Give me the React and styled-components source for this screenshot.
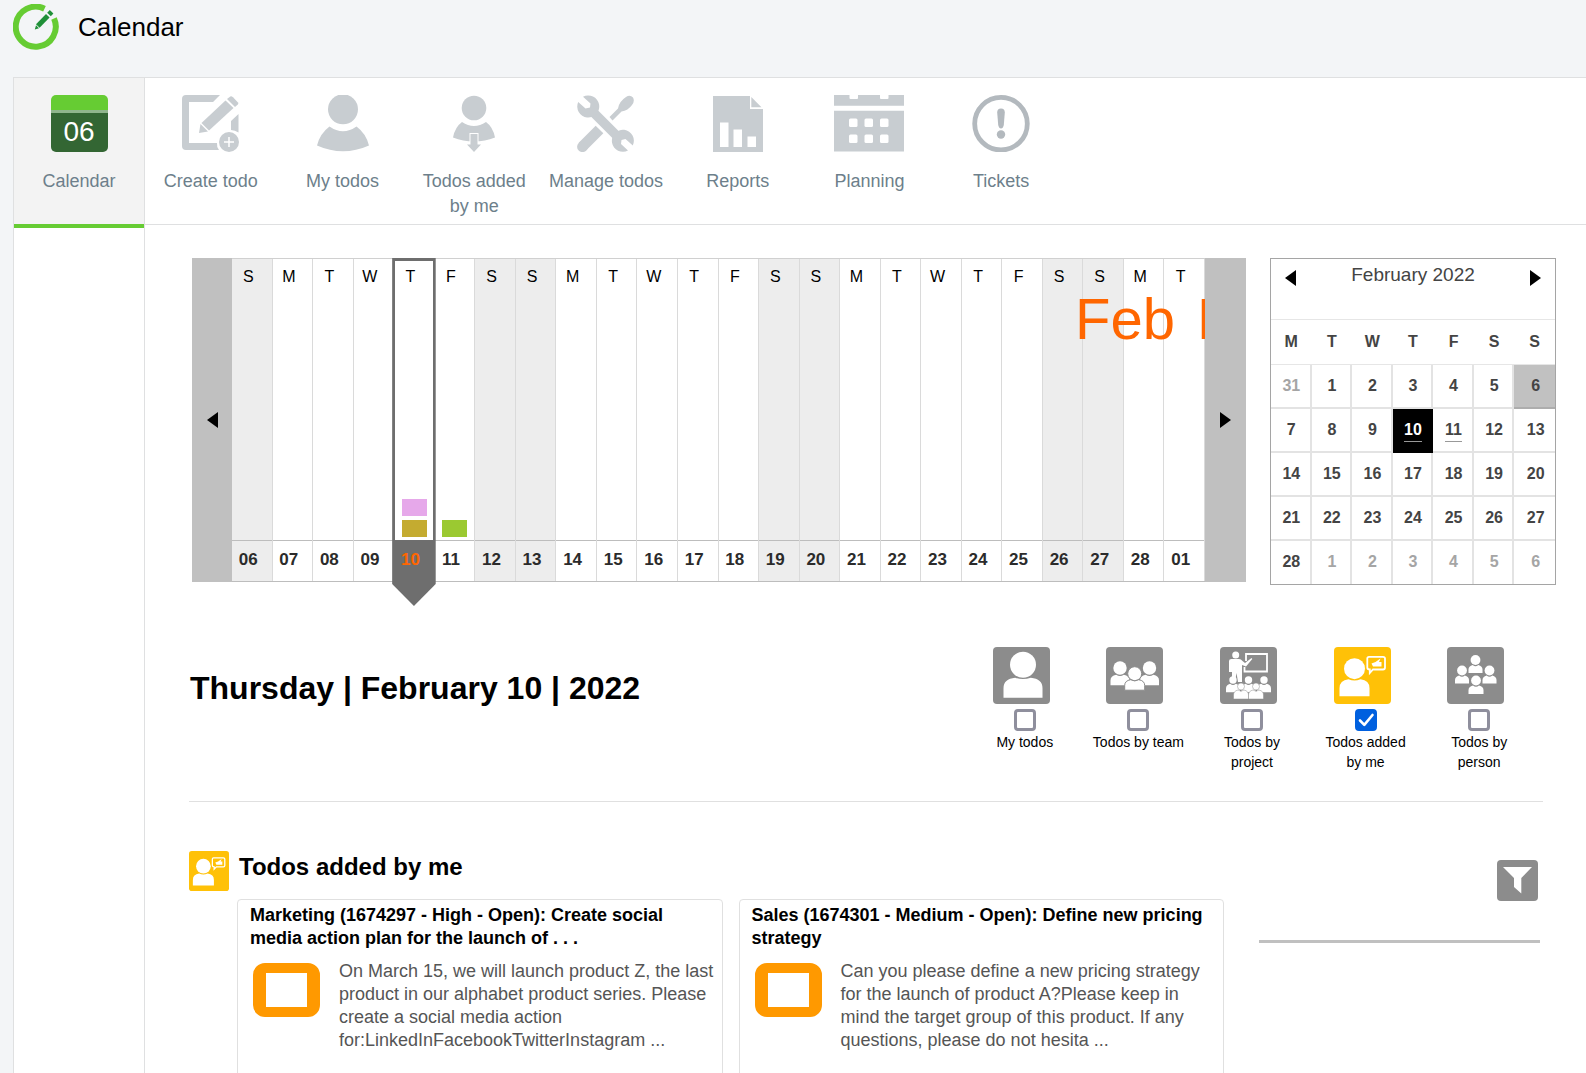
import React, { useState } from "react";
import styled, { createGlobalStyle, css } from "styled-components";

const GlobalStyle = createGlobalStyle`
  *, *::before, *::after { box-sizing: border-box; }
  html, body { margin: 0; padding: 0; }
  body {
    background: #f3f5f7;
    color: #000;
    font-family: "Liberation Sans", Arial, sans-serif;
  }
  h1, h2, h3, p, ol, ul { margin: 0; padding: 0; list-style: none; }
  button { font: inherit; color: inherit; background: none; border: 0; padding: 0; cursor: pointer; }
  svg { display: block; flex: none; }
`;

/* ---------- shell ---------- */

const Shell = styled.div`
  display: flex;
  flex-direction: column;
  height: 100vh;
  overflow: hidden;
`;

const Header = styled.header`
  display: flex;
  align-items: flex-start;
  gap: 19px;
  height: 77px;
  flex: none;
  padding: 4px 0 0 13px;
`;

const PageTitle = styled.h1`
  font-size: 26px;
  font-weight: 400;
  line-height: 46px;
`;

const Panel = styled.div`
  display: flex;
  flex-direction: column;
  flex: 1;
  min-height: 0;
  margin-left: 13px;
  background: #fff;
  border: solid #dfe0e1;
  border-width: 1px 0 0 1px;
`;

const Nav = styled.nav`
  flex: none;
  border-bottom: 1px solid #dfe0e1;
`;

const NavList = styled.ul`
  display: grid;
  grid-template-columns: 131px repeat(7, 1fr);
  max-width: 1053px;
`;

const NavItem = styled.li`
  display: flex;
  height: 146px;
  ${(p) =>
    p.$active &&
    css`
      height: 150px;
      margin-bottom: -4px;
      background: #f3f3f3;
      border-right: 1px solid #dfe0e1;
      position: relative;
      &::after {
        content: "";
        position: absolute;
        left: 0;
        right: 0;
        bottom: 0;
        height: 4px;
        background: #66cc33;
      }
    `}
`;

const NavLink = styled.a`
  display: flex;
  flex-direction: column;
  align-items: center;
  gap: 17px;
  flex: 1;
  padding: 17px 8px 0;
  color: #6d7f8b;
  font-size: 18px;
  line-height: 25px;
  text-align: center;
  text-decoration: none;
`;

const DayBadge = styled.span`
  display: flex;
  align-items: center;
  justify-content: center;
  width: 57px;
  height: 57px;
  padding-top: 15px;
  border-radius: 5px;
  background: linear-gradient(#66cc33 15px, #8fb58c 15px, #8fb58c 18px, #336633 18px);
  color: #fff;
  font-size: 28px;
`;

const Columns = styled.div`
  display: flex;
  flex: 1;
  min-height: 0;
`;

const Aside = styled.aside`
  flex: none;
  width: 131px;
  border-right: 1px solid #dfe0e1;
`;

const Main = styled.main`
  flex: 1;
  min-width: 0;
`;

/* ---------- timeline ---------- */

const Overview = styled.section`
  display: flex;
  align-items: flex-start;
  gap: 24px;
  padding: 33px 30px 0 47px;
`;

const Timeline = styled.div`
  display: flex;
  flex: 1;
  min-width: 0;
  height: 324px;
`;

const TimelineArrow = styled.button`
  display: flex;
  flex: none;
  align-items: center;
  justify-content: center;
  width: ${(p) => (p.$end ? 41 : 40)}px;
  background: #c0c0c0;
`;

const TimelineBody = styled.div`
  position: relative;
  flex: 1;
  min-width: 0;
`;

const Days = styled.ol`
  display: grid;
  grid-template-columns: repeat(24, 1fr);
  height: 100%;
  border-top: 1px solid #d0d0d0;
  border-bottom: 1px solid #bdbdbd;
`;

const Day = styled.li`
  position: relative;
  display: flex;
  flex-direction: column;
  background: ${(p) => (p.$weekend ? "#ededed" : "#fff")};
  border-right: 1px solid #dadada;
  z-index: ${(p) => (p.$selected ? 1 : 0)};
`;

const DayLetter = styled.span`
  position: relative;
  padding: 8px 7px 0 0;
  color: #000;
  font-size: 16px;
  line-height: 20px;
  text-align: center;
`;

const Tags = styled.div`
  position: relative;
  display: flex;
  flex: 1;
  flex-direction: column;
  align-items: center;
  justify-content: flex-end;
  gap: 4px;
  padding: 0 0 3px 1px;
`;

const Tag = styled.span`
  width: 25px;
  height: 17px;
  background: ${(p) => p.$color};
`;

const DayNumber = styled.span`
  position: relative;
  height: 41px;
  padding-right: 7px;
  border-top: 1px solid #bdbdbd;
  color: ${(p) => (p.$selected ? "#ff6600" : "#2b2b2b")};
  font-size: 17px;
  font-weight: 700;
  line-height: 38px;
  text-align: center;
  ${(p) => p.$selected && "border-color: #6e6e6e;"}
`;

const Marker = styled.span`
  position: absolute;
  top: -1px;
  right: -2px;
  bottom: -25px;
  left: -2px;
  background: #6e6e6e;
  clip-path: polygon(0 0, 100% 0, 100% calc(100% - 22px), 50% 100%, 0 calc(100% - 22px));

  &::after {
    content: "";
    position: absolute;
    inset: 3px 3px 66px;
    background: #fff;
  }
`;

const MonthLabels = styled.div`
  position: absolute;
  inset: 0;
  display: flex;
  gap: 22px;
  padding: 28px 0 0 843px;
  overflow: hidden;
  pointer-events: none;
  color: #ff6600;
  font-size: 58px;
  line-height: 66px;
`;

/* ---------- month picker ---------- */

const Picker = styled.div`
  flex: none;
  width: 286px;
  border: 1px solid #a5a5a5;
  color: #444;
`;

const PickerHead = styled.div`
  display: flex;
  align-items: flex-start;
  justify-content: space-between;
  height: 61px;
  padding: 5px 14px 0;
  border-bottom: 1px solid #e6e6e6;
`;

const PickerArrow = styled.button`
  padding-top: 6px;
`;

const PickerTitle = styled.h2`
  font-size: 19px;
  font-weight: 400;
  line-height: 22px;
`;

const PickerTable = styled.table`
  width: 100%;
  table-layout: fixed;
  border-collapse: separate;
  border-spacing: 0;
  font-size: 16px;
  font-weight: 700;
`;

const Weekday = styled.th`
  height: 45px;
  padding: 0;
  border-bottom: 1px solid #e6e6e6;
`;

const DateButton = styled.button`
  display: flex;
  align-items: center;
  justify-content: center;
  width: 100%;
  height: 42px;
  padding-left: 2px;
`;

const DateCell = styled.td`
  height: 44px;
  padding: 0;
  border: solid #e3e3e3;
  border-width: 0 2px 2px 0;
  color: ${(p) => (p.$muted ? "#a5a5a5" : "#444")};
  &:last-child { border-right: 0; }
  tr:last-child > & {
    height: 43px;
    border-bottom: 0;
    vertical-align: top;
  }
  ${(p) =>
    p.$today &&
    css`
      background: #c1c1c1;
      border-color: #adadad;
    `}
  ${(p) =>
    p.$selected &&
    css`
      background: #000;
      border-color: #000;
      color: #fff;
    `}
`;

const DateText = styled.span`
  line-height: 22px;
  ${(p) =>
    p.$marked &&
    css`
      margin-top: 1px;
      border-bottom: 1px solid #999;
    `}
`;

/* ---------- day heading and filters ---------- */

const DaySection = styled.section`
  display: flex;
  justify-content: space-between;
  margin: 62px 43px 0 44px;
  padding: 0 7px 29px 1px;
  border-bottom: 1px solid #e0e0e0;
`;

const DayHeading = styled.h2`
  padding-top: 23px;
  font-size: 32px;
  line-height: 36px;
`;

const Filters = styled.div`
  display: grid;
  grid-template-columns: repeat(5, 1fr);
  width: 568px;
`;

const FilterItem = styled.label`
  display: flex;
  flex-direction: column;
  align-items: center;
  padding: 0 9px;
  font-size: 14px;
  line-height: 20px;
  text-align: center;
  cursor: pointer;
`;

const FilterIcon = styled.span`
  padding-right: 7px;
  margin-bottom: 5px;
`;

const CheckWrap = styled.span`
  position: relative;
  display: flex;
  width: 22px;
  height: 22px;
  margin-bottom: 1px;

  svg { position: absolute; inset: 0; pointer-events: none; }
`;

const Checkbox = styled.input`
  appearance: none;
  width: 22px;
  height: 22px;
  margin: 0;
  border: 3px solid #8f8f9d;
  border-radius: 4px;
  background: #fff;
  &:checked { border-color: #0060df; background: #0060df; }
`;

/* ---------- todo list ---------- */

const TodoSection = styled.section`
  display: flex;
  gap: 35px;
  margin: 0 46px 0 44px;
  padding-top: 49px;
`;

const TodoList = styled.div`
  flex: 1;
  min-width: 0;
`;

const TodoHead = styled.div`
  display: flex;
  gap: 10px;
  margin-bottom: 8px;
`;

const TodoTitle = styled.h2`
  padding-top: 2px;
  font-size: 24px;
  line-height: 28px;
`;

const Cards = styled.div`
  display: grid;
  grid-template-columns: 1fr 1fr;
  gap: 16px;
  margin-left: 48px;
`;

const Card = styled.article`
  min-height: 210px;
  padding: 4px 8px 24px 12px;
  border: 1px solid #e0e0e0;
  border-radius: 4px;
  font-size: 18px;
  line-height: 23px;
`;

const CardTitle = styled.h3`
  font-size: 18px;
`;

const CardBody = styled.div`
  display: flex;
  align-items: flex-start;
  gap: 19px;
  padding: 10px 0 0 3px;
  color: #555;
`;

const Status = styled.span`
  flex: none;
  width: 67px;
  height: 54px;
  margin-top: 3px;
  border: solid #ff9900;
  border-width: 10px 13px;
  border-radius: 12px;
`;

const Tools = styled.div`
  display: flex;
  flex: none;
  flex-direction: column;
  align-items: flex-end;
  gap: 39px;
  width: 281px;
  padding-top: 9px;
`;

const ToolButton = styled.button`
  display: flex;
  align-items: center;
  justify-content: center;
  width: 41px;
  height: 41px;
  margin-right: 2px;
  border-radius: 4px;
  background: #8c8c8c;
`;

const ToolRule = styled.hr`
  width: 100%;
  height: 3px;
  margin: 0;
  border: 0;
  background: #c0c0c0;
`;

/* ---------- drawings ---------- */

const GREY = "#c8cdd1";

const Logo = () => (
  <svg width="46" height="46" viewBox="0 0 46 46" aria-hidden="true">
    <path d="M31.5 4.700A20 20 0 1 0 41 14.500" fill="none" stroke="#66cc33" strokeWidth="6" />
    <path d="M21.800 25.500L23 21.200L26 24.200Z" fill="#1f9038" />
    <path d="M24.800 22L34.800 11.800" stroke="#1f9038" strokeWidth="5" />
    <path d="M36 10.500L38.600 7.800" stroke="#1f9038" strokeWidth="5" />
  </svg>
);

const CreateIcon = () => (
  <svg width="57" height="57" viewBox="0 0 57 57" fill={GREY} aria-hidden="true">
    <path d="M38 0H4Q0 0 0 4V51Q0 55 4 55H37Q34.500 51.500 35 48H7V7H31Z" />
    <path d="M56.500 19V37.500Q53 35 49 35V26Z" />
    <path d="M17 38L18.500 29L26 36.500Z" />
    <path d="M19.500 28L43.500 5.500L51.500 13L27 35.500Z" />
    <path d="M45 4L48.300 1.500Q49.500 1 51 2.300L56 7.500Q56.800 8.600 55.800 9.600L53 12Z" />
    <circle cx="47" cy="47" r="10" />
    <path d="M47 42V52M42 47H52" stroke="#fff" strokeWidth="1.500" />
  </svg>
);

const PersonIcon = () => (
  <svg width="52" height="57" viewBox="0 0 52 57" fill={GREY} aria-hidden="true">
    <ellipse cx="26" cy="14.300" rx="15" ry="15" />
    <path d="M12.500 31.500Q26 41 39.500 31.500Q49 38.500 52 50.500Q39 56.300 26 56.300Q13 56.300 0 50.500Q3 38.500 12.500 31.500Z" />
  </svg>
);

const DelegateIcon = () => (
  <svg width="42" height="57" viewBox="0 0 42 57" fill={GREY} aria-hidden="true">
    <circle cx="21" cy="13" r="12.300" />
    <path d="M9 27Q21 35 33 27Q40 32 42 42.500Q32 46.500 21 46.500Q10 46.500 0 42.500Q2 32 9 27Z" />
    <path d="M17.500 39H24.500V50H27.500L21 57L14.500 50H17.500Z" fill="none" stroke="#fff" strokeWidth="2" />
    <path d="M17.500 39H24.500V49.500H28L21 57L14 49.500H17.500Z" />
  </svg>
);

const ToolsIcon = () => (
  <svg width="57" height="57" viewBox="0 0 57 57" fill="none" aria-hidden="true">
    <path d="M5.500 51.500L22.500 34.500" stroke={GREY} strokeWidth="10.800" />
    <circle cx="5.500" cy="51.700" r="5.400" fill={GREY} />
    <path d="M32.500 22L41 13.500Q42 6.500 49 2Q53 -.5 56 2.500Q58 6 55 10Q51 15.500 44.500 16.500L35.500 25.500Z" fill={GREY} />
    <path d="M15 16L42 43" stroke={GREY} strokeWidth="9.500" />
    <path d="M6 1.800A11 11 0 1 1 1.200 7L8.500 13.500L13 12.500L13.500 8.500Z" fill={GREY} />
    <path d="M51 55.500A11 11 0 1 1 55.800 50.500L48.500 44L44.500 45L44 49Z" fill={GREY} />
  </svg>
);

const ReportsIcon = () => (
  <svg width="50" height="57" viewBox="0 0 50 57" aria-hidden="true">
    <path d="M0 1H37V14H50V57H0Z" fill={GREY} />
    <path d="M38.300 2L48.500 12.300H38.300Z" fill={GREY} />
    <path d="M7 27.500H15.500V52H7ZM20.500 34.500H29V52H20.500ZM34.500 41.500H43V52H34.500Z" fill="#fff" />
  </svg>
);

const PlanningIcon = () => (
  <svg width="70" height="57" viewBox="0 0 70 57" aria-hidden="true">
    <path d="M0 0H70V10.700H0ZM0 15.700H70V56.500H0Z" fill={GREY} />
    <g fill="#fff">
      <rect x="15.500" y="-3" width="8.500" height="7" rx="1" />
      <rect x="46" y="-3" width="8.500" height="7" rx="1" />
      {[15, 30.5, 46].map((x) =>
        [23.5, 39.5].map((y) => <rect key={`${x}-${y}`} x={x} y={y} width="8.500" height="8.500" rx="1.500" />)
      )}
    </g>
  </svg>
);

const TicketsIcon = () => (
  <svg width="58" height="57" viewBox="0 0 58 57" aria-hidden="true">
    <circle cx="29" cy="28.700" r="26.300" fill="none" stroke="#b3b9be" strokeWidth="4.800" />
    <path d="M25.200 17.500Q25.200 13.500 29 13.500Q32.800 13.500 32.800 17.500L31.800 30Q31 33.500 29 33.500Q27 33.500 26.200 30Z" fill="#b3b9be" />
    <circle cx="29" cy="39.500" r="4.200" fill="#b3b9be" />
  </svg>
);

const Bust = ({ x, y, r, w, h, gap = 1 }) => {
  const top = y + r + gap;
  return (
    <g>
      <circle cx={x} cy={y} r={r} />
      <path
        d={`M${x - w / 2} ${top + h}V${top + h / 2}Q${x - w / 2} ${top} ${x - w / 5} ${top - 1}Q${x} ${top + 1.5} ${x + w / 5} ${top - 1}Q${x + w / 2} ${top} ${x + w / 2} ${top + h / 2}V${top + h}Z`}
      />
    </g>
  );
};

const Tile = ({ size = 57, color = "#8c8c8c", children }) => (
  <svg width={size} height={size} viewBox="0 0 57 57" fill="#fff" aria-hidden="true">
    <rect width="57" height="57" rx="4" fill={color} />
    {children}
  </svg>
);

const MineTile = () => (
  <Tile>
    <Bust x={30} y={17.7} r={13} w={39} h={19} gap={1} />
  </Tile>
);

const TeamTile = () => (
  <Tile>
    <Bust x={14} y={21} r={6.7} w={19} h={9.5} />
    <Bust x={43.5} y={21} r={6.7} w={19} h={9.5} />
    <g stroke="#8c8c8c" strokeWidth="1">
      <Bust x={28.7} y={26.7} r={7} w={20} h={9.5} gap={0} />
    </g>
  </Tile>
);

const ProjectTile = () => (
  <Tile>
    <circle cx="15.700" cy="8" r="3.500" />
    <path d="M9 14Q9 12 11.500 12H19Q21 12 22.500 14L25 16L31.500 11L32.300 12L26 19.500L22 18V35H18L16.500 26L15 35H12V25H9Z" />
    <path d="M26 14V7H47V24.500H24.500V20" fill="none" stroke="#fff" strokeWidth="1.800" />
    <Bust x={13} y={33} r={3.7} w={14} h={7.5} />
    <Bust x={28.5} y={33} r={3.7} w={14} h={7.5} />
    <Bust x={44} y={33} r={3.7} w={14} h={7.5} />
    <g stroke="#8c8c8c" strokeWidth=".5">
      <Bust x={21} y={39.5} r={3.5} w={15} h={8} />
      <Bust x={36} y={39.5} r={3.5} w={15} h={8} />
    </g>
  </Tile>
);

const AddedTile = ({ size }) => (
  <Tile size={size} color="#ffc107">
    <Bust x={20.5} y={21.7} r={10.5} w={30} h={16} gap={1} />
    <path d="M35 9.800H49Q51 9.800 51 11.500V20.500Q51 22.500 49 22.500H39L35.800 26V22.500Q33.300 22.500 33.300 20.500V11.500Q33.300 9.800 35 9.800Z" fill="none" stroke="#fff" strokeWidth="1.800" />
    <path d="M37.500 16.500L41.500 15L46.500 11.500L45 15H47.500V19.500H39Z" />
  </Tile>
);

const PeopleTile = () => (
  <Tile>
    <Bust x={28.5} y={13} r={4.9} w={14} h={7} />
    <Bust x={15} y={23.5} r={4.9} w={14} h={7} />
    <Bust x={42.5} y={23.5} r={4.9} w={14} h={7} />
    <Bust x={29} y={33.5} r={4.9} w={15} h={7.5} />
  </Tile>
);

const Triangle = ({ left }) => (
  <svg width="11" height="16" viewBox="0 0 11 16" aria-hidden="true">
    <path d={left ? "M11 0V16L0 8Z" : "M0 0V16L11 8Z"} fill="#000" />
  </svg>
);

const FunnelIcon = () => (
  <svg width="29" height="27" viewBox="0 0 29 27" fill="#fff" aria-hidden="true">
    <path d="M0 0H29L18.300 11V26.500L11 20V11Z" />
  </svg>
);

/* ---------- data ---------- */

const navItems = [
  { label: "Calendar", icon: <DayBadge>06</DayBadge>, active: true },
  { label: "Create todo", icon: <CreateIcon /> },
  { label: "My todos", icon: <PersonIcon /> },
  { label: "Todos added by me", icon: <DelegateIcon /> },
  { label: "Manage todos", icon: <ToolsIcon /> },
  { label: "Reports", icon: <ReportsIcon /> },
  { label: "Planning", icon: <PlanningIcon /> },
  { label: "Tickets", icon: <TicketsIcon /> },
];

const tags = { 10: ["#e6a8ea", "#c4ab30"], 11: ["#9bc931"] };

const days = Array.from({ length: 24 }, (_, i) => {
  const date = i + 6 > 28 ? i + 6 - 28 : i + 6;
  return {
    date,
    letter: "SMTWTFS"[i % 7],
    weekend: i % 7 === 0 || i % 7 === 6,
    selected: date === 10,
    tags: tags[date] || [],
  };
});

const weeks = [
  [31, 1, 2, 3, 4, 5, 6],
  [7, 8, 9, 10, 11, 12, 13],
  [14, 15, 16, 17, 18, 19, 20],
  [21, 22, 23, 24, 25, 26, 27],
  [28, 1, 2, 3, 4, 5, 6],
];

const filterItems = [
  { id: "mine", label: "My todos", icon: <MineTile /> },
  { id: "team", label: "Todos by team", icon: <TeamTile /> },
  { id: "project", label: "Todos by project", icon: <ProjectTile /> },
  { id: "added", label: "Todos added by me", icon: <AddedTile /> },
  { id: "person", label: "Todos by person", icon: <PeopleTile /> },
];

const todos = [
  {
    title: "Marketing (1674297 - High - Open): Create social media action plan for the launch of . . .",
    text: "On March 15, we will launch product Z, the last product in our alphabet product series. Please create a social media action for:LinkedInFacebookTwitterInstagram ...",
  },
  {
    title: "Sales (1674301 - Medium - Open): Define new pricing strategy",
    text: "Can you please define a new pricing strategy for the launch of product A?Please keep in mind the target group of this product. If any questions, please do not hesita ...",
  },
];

/* ---------- page ---------- */

function MonthPicker() {
  return (
    <Picker>
      <PickerHead>
        <PickerArrow aria-label="Previous month"><Triangle left /></PickerArrow>
        <PickerTitle>February 2022</PickerTitle>
        <PickerArrow aria-label="Next month"><Triangle /></PickerArrow>
      </PickerHead>
      <PickerTable>
        <thead>
          <tr>
            {[..."MTWTFSS"].map((d, i) => (
              <Weekday key={i} scope="col">{d}</Weekday>
            ))}
          </tr>
        </thead>
        <tbody>
          {weeks.map((week, w) => (
            <tr key={w}>
              {week.map((d, i) => (
                <DateCell
                  key={i}
                  $muted={(w === 0 && d > 7) || (w === 4 && d < 8)}
                  $today={w === 0 && d === 6}
                  $selected={d === 10}
                >
                  <DateButton>
                    <DateText $marked={Boolean(tags[d])}>{d}</DateText>
                  </DateButton>
                </DateCell>
              ))}
            </tr>
          ))}
        </tbody>
      </PickerTable>
    </Picker>
  );
}

function TimelineStrip() {
  return (
    <Timeline>
      <TimelineArrow aria-label="Earlier days"><Triangle left /></TimelineArrow>
      <TimelineBody>
        <Days>
          {days.map((d, i) => (
            <Day key={i} $weekend={d.weekend} $selected={d.selected}>
              {d.selected && <Marker />}
              <DayLetter>{d.letter}</DayLetter>
              <Tags>
                {d.tags.map((c) => <Tag key={c} $color={c} />)}
              </Tags>
              <DayNumber $selected={d.selected}>{String(d.date).padStart(2, "0")}</DayNumber>
            </Day>
          ))}
        </Days>
        <MonthLabels>
          <span>Feb</span>
          <span>M</span>
        </MonthLabels>
      </TimelineBody>
      <TimelineArrow $end aria-label="Later days"><Triangle /></TimelineArrow>
    </Timeline>
  );
}

export default function App() {
  const [checked, setChecked] = useState({ added: true });
  const toggle = (id) => setChecked((c) => ({ ...c, [id]: !c[id] }));

  return (
    <Shell>
      <GlobalStyle />
      <Header>
        <Logo />
        <PageTitle>Calendar</PageTitle>
      </Header>
      <Panel>
        <Nav>
          <NavList>
            {navItems.map((n) => (
              <NavItem key={n.label} $active={n.active}>
                <NavLink href="#">
                  {n.icon}
                  <span>{n.label}</span>
                </NavLink>
              </NavItem>
            ))}
          </NavList>
        </Nav>
        <Columns>
          <Aside />
          <Main>
            <Overview>
              <TimelineStrip />
              <MonthPicker />
            </Overview>
            <DaySection>
              <DayHeading>Thursday | February 10 | 2022</DayHeading>
              <Filters>
                {filterItems.map((f) => (
                  <FilterItem key={f.id} htmlFor={f.id}>
                    <FilterIcon>{f.icon}</FilterIcon>
                    <CheckWrap>
                      <Checkbox
                        type="checkbox"
                        id={f.id}
                        checked={Boolean(checked[f.id])}
                        onChange={() => toggle(f.id)}
                      />
                      {checked[f.id] && (
                        <svg width="22" height="22" viewBox="0 0 22 22" aria-hidden="true">
                          <path d="M5 11.500L9.300 15.800L17.500 6" fill="none" stroke="#fff" strokeWidth="2.600" strokeLinecap="round" strokeLinejoin="round" />
                        </svg>
                      )}
                    </CheckWrap>
                    <span>{f.label}</span>
                  </FilterItem>
                ))}
              </Filters>
            </DaySection>
            <TodoSection>
              <TodoList>
                <TodoHead>
                  <AddedTile size={40} />
                  <TodoTitle>Todos added by me</TodoTitle>
                </TodoHead>
                <Cards>
                  {todos.map((t) => (
                    <Card key={t.title}>
                      <CardTitle>{t.title}</CardTitle>
                      <CardBody>
                        <Status />
                        <p>{t.text}</p>
                      </CardBody>
                    </Card>
                  ))}
                </Cards>
              </TodoList>
              <Tools>
                <ToolButton aria-label="Filter todos"><FunnelIcon /></ToolButton>
                <ToolRule />
              </Tools>
            </TodoSection>
          </Main>
        </Columns>
      </Panel>
    </Shell>
  );
}
